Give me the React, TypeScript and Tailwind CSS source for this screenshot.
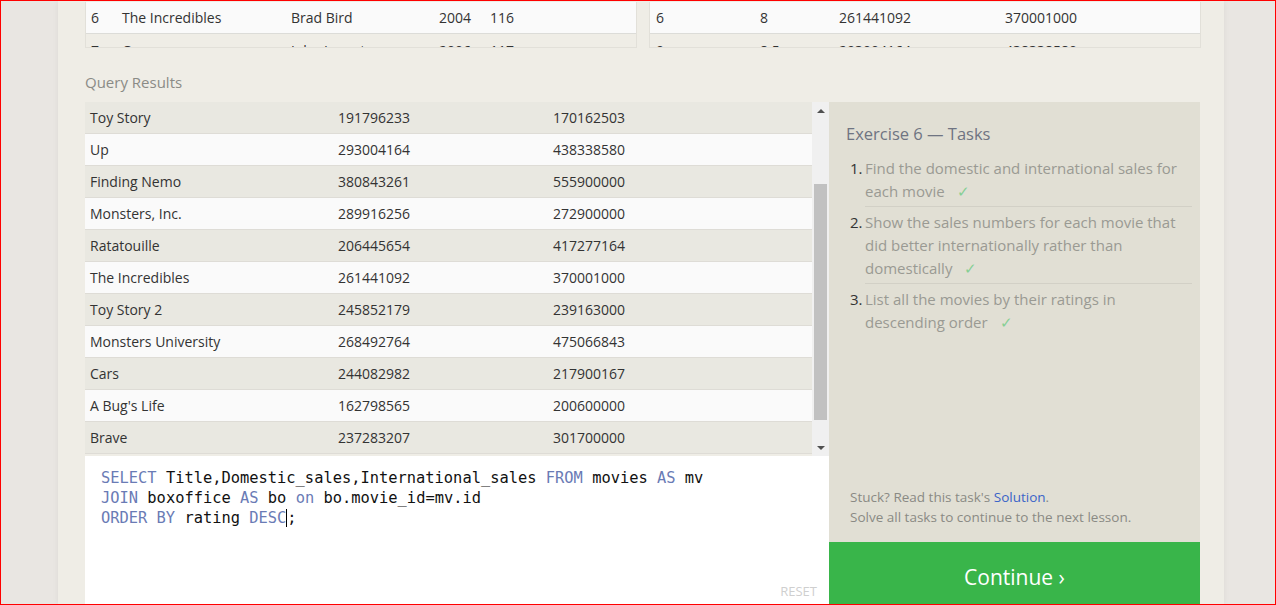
import React from "react";

const sans = { fontFamily: '"Open Sans", "Noto Sans", sans-serif' };
const mono = { fontFamily: '"DejaVu Sans Mono", "Liberation Mono", monospace' };

const results: [string, string, string][] = [
  ["Toy Story", "191796233", "170162503"],
  ["Up", "293004164", "438338580"],
  ["Finding Nemo", "380843261", "555900000"],
  ["Monsters, Inc.", "289916256", "272900000"],
  ["Ratatouille", "206445654", "417277164"],
  ["The Incredibles", "261441092", "370001000"],
  ["Toy Story 2", "245852179", "239163000"],
  ["Monsters University", "268492764", "475066843"],
  ["Cars", "244082982", "217900167"],
  ["A Bug's Life", "162798565", "200600000"],
  ["Brave", "237283207", "301700000"],
];

function Check() {
  return <span className="ml-[12px] text-[#86cf95]">✓</span>;
}

export default function App() {
  return (
    <div
      className="h-[605px] w-full overflow-hidden border border-[#ff0000] bg-[#e9e6e2] text-[#333]"
      style={sans}
    >
      <div className="ml-[57px] mr-[51px] flex h-full flex-col overflow-hidden bg-[#efede6] pl-[27px] pr-[23px] shadow-[0_0_6px_rgba(0,0,0,0.06)]">
        {/* top tables (scrolled) */}
        <div className="mt-[1px] flex shrink-0 gap-[12px] text-[14px]">
          <div className="h-[46px] w-[552px] overflow-hidden border-x border-b border-[#e2e0d9]">
            <div className="flex h-[32px] items-center border-b border-[#dcdcd8] bg-[#fafafa] pl-[5px]">
              <span className="w-[31px]">6</span>
              <span className="w-[169px]">The Incredibles</span>
              <span className="w-[148px]">Brad Bird</span>
              <span className="w-[51px]">2004</span>
              <span>116</span>
            </div>
            <div className="flex h-[32px] items-center bg-[#efede6] pl-[5px]">
              <span className="w-[31px]">7</span>
              <span className="w-[169px]">Cars</span>
              <span className="w-[148px]">John Lasseter</span>
              <span className="w-[51px]">2006</span>
              <span>117</span>
            </div>
          </div>
          <div className="h-[46px] w-[552px] overflow-hidden border-x border-b border-[#e2e0d9]">
            <div className="flex h-[32px] items-center border-b border-[#dcdcd8] bg-[#fafafa] pl-[6px]">
              <span className="w-[104px]">6</span>
              <span className="w-[79px]">8</span>
              <span className="w-[166px]">261441092</span>
              <span>370001000</span>
            </div>
            <div className="flex h-[32px] items-center bg-[#efede6] pl-[6px]">
              <span className="w-[104px]">9</span>
              <span className="w-[79px]">8.5</span>
              <span className="w-[166px]">293004164</span>
              <span>438338580</span>
            </div>
          </div>
        </div>

        <div className="mt-[24px] h-[30px] shrink-0 text-[15px] leading-[20px] text-[#8b8b86]">
          Query Results
        </div>

        <div className="flex shrink-0">
          {/* left column */}
          <div className="flex w-[744px] flex-col">
            <div className="flex h-[354px] shrink-0">
              <div className="flex-1 overflow-hidden text-[14px]">
                {results.map((r, i) => (
                  <div
                    key={i}
                    className={
                      "flex h-[32px] items-center border-b border-[#dedcd6] pl-[5px] " +
                      (i % 2 === 0 ? "bg-[#e9e8e1]" : "bg-[#fafafa]")
                    }
                  >
                    <span className="w-[248px]">{r[0]}</span>
                    <span className="w-[215px]">{r[1]}</span>
                    <span>{r[2]}</span>
                  </div>
                ))}
              </div>
              <div className="relative w-[17px] bg-[#f0f0f0]">
                <div className="absolute left-[5px] top-[7px] h-0 w-0 border-x-[4px] border-b-[4px] border-x-transparent border-b-[#505050]" />
                <div className="absolute left-[2px] top-[82px] h-[236px] w-[13px] bg-[#c1c1c1]" />
                <div className="absolute left-[5px] top-[344px] h-0 w-0 border-x-[4px] border-t-[4px] border-x-transparent border-t-[#505050]" />
              </div>
            </div>
            <div className="relative h-[150px] shrink-0 bg-white pl-[16px] pt-[12px] text-[15.4px] leading-[20px] text-[#111]" style={mono}>
              <div>
                <span className="text-[#6a7bb5]">SELECT</span> Title,Domestic_sales,International_sales{" "}
                <span className="text-[#6a7bb5]">FROM</span> movies <span className="text-[#6a7bb5]">AS</span> mv
              </div>
              <div>
                <span className="text-[#6a7bb5]">JOIN</span> boxoffice <span className="text-[#6a7bb5]">AS</span> bo{" "}
                <span className="text-[#6a7bb5]">on</span> bo.movie_id=mv.id
              </div>
              <div>
                <span className="text-[#6a7bb5]">ORDER BY</span> rating <span className="text-[#6a7bb5]">DESC</span>
                <span className="border-l border-black">;</span>
              </div>
              <div className="absolute top-[125px] right-[12px] text-[13px] text-[#cfcfcf]" style={sans}>
                RESET
              </div>
            </div>
          </div>

          {/* right column */}
          <div className="flex w-[371px] flex-col">
            <div className="flex h-[440px] shrink-0 flex-col bg-[#e1dfd4] pl-[17px] pr-[8px]">
              <div className="mt-[20px] text-[16.5px] leading-[24px] text-[#6f7482]">Exercise 6 — Tasks</div>
              <div className="mt-[11px] text-[15px] leading-[23px] text-[#9a9a93]">
                <div className="flex">
                  <span className="w-[19px] pl-[4px] text-[#333]">1.</span>
                  <div className="flex-1 border-b border-[#d2d0c6] pb-[3px]">
                    Find the domestic and international sales for each movie
                    <Check />
                  </div>
                </div>
                <div className="flex pt-[4px]">
                  <span className="w-[19px] pl-[4px] text-[#333]">2.</span>
                  <div className="flex-1 border-b border-[#d2d0c6] pb-[3px]">
                    Show the sales numbers for each movie that did better internationally rather than domestically
                    <Check />
                  </div>
                </div>
                <div className="flex pt-[4px]">
                  <span className="w-[19px] pl-[4px] text-[#333]">3.</span>
                  <div className="flex-1 pr-[60px]">
                    List all the movies by their ratings in descending order
                    <Check />
                  </div>
                </div>
              </div>
              <div className="mt-auto mb-[15px] pl-[4px] text-[13.5px] leading-[20px] text-[#8a8a84]">
                <div>
                  Stuck? Read this task's <span className="text-[#3a64c8]">Solution</span>.
                </div>
                <div>Solve all tasks to continue to the next lesson.</div>
              </div>
            </div>
            <div className="flex h-[70px] shrink-0 items-start justify-center bg-[#39b54a] pt-[20px] text-[21px] leading-[30px] text-white">
              Continue ›
            </div>
          </div>
        </div>
      </div>
    </div>
  );
}
